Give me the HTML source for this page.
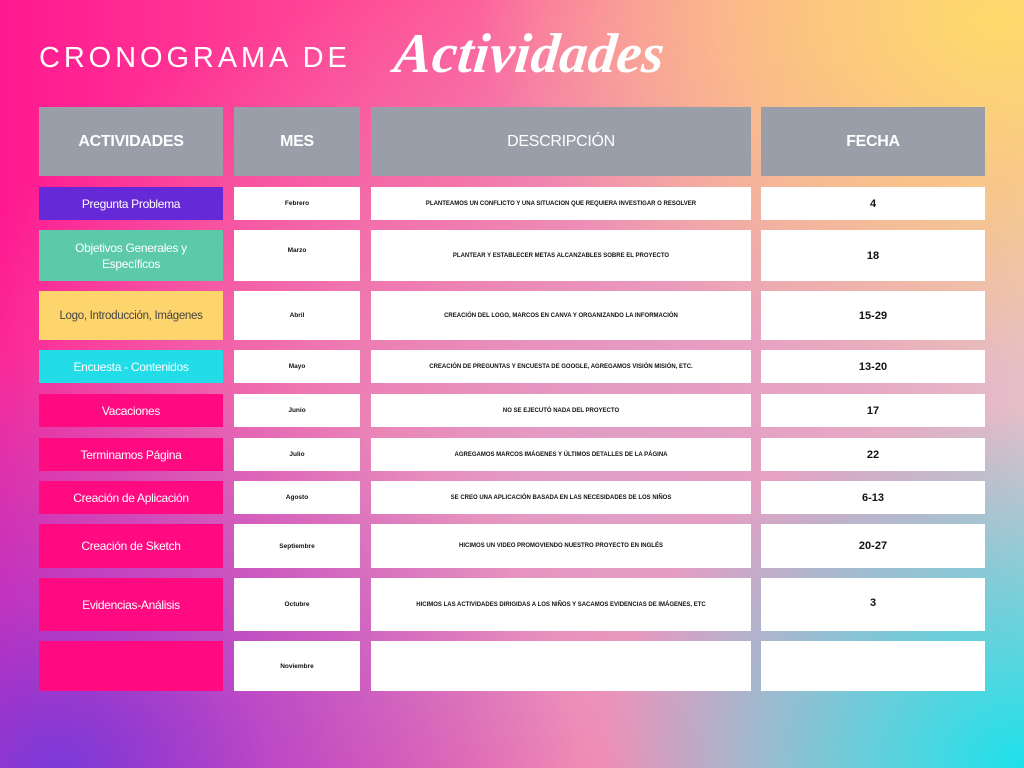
<!DOCTYPE html>
<html><head><meta charset="utf-8"><style>
*{margin:0;padding:0;box-sizing:border-box}
body{width:1024px;height:768px;overflow:hidden;position:relative;font-family:"Liberation Sans",sans-serif;
background:
radial-gradient(ellipse 420px 360px at 1024px 768px,#1ce0ea 0%,rgba(40,220,230,0.6) 45%,rgba(40,220,230,0) 100%),
radial-gradient(ellipse 520px 360px at 1000px 20px,#ffd96a 0%,rgba(255,200,110,0.7) 45%,rgba(255,180,120,0) 100%),
radial-gradient(ellipse 520px 420px at 60px 768px,#7a3ad8 0%,rgba(150,60,220,0.6) 40%,rgba(150,60,220,0) 100%),
radial-gradient(ellipse 700px 520px at 600px 480px,#e0a0c8 0%,rgba(230,150,190,0) 100%),
linear-gradient(90deg,#ff1890 0%,#ff5a98 45%,#f5a8b8 75%,#e8d0c8 100%);}
.t1{position:absolute;left:39px;top:42px;color:#fff;font-size:29px;letter-spacing:3.9px;font-weight:400}
.t2{position:absolute;left:398px;top:22px;color:#fff;font-family:"Liberation Serif",serif;font-style:italic;font-weight:bold;font-size:56px;letter-spacing:0.5px;transform-origin:left top;transform:skewX(-6deg)}
.c{position:absolute;display:flex;align-items:center;justify-content:center;text-align:center}
.h{background:#9a9ea9;color:#fff;font-size:16px;font-weight:bold;top:107px;height:69px;letter-spacing:-0.3px}
.w{background:#fff;color:#111}
.m{font-size:6.5px;font-weight:bold}
.d{font-size:6px;font-weight:bold;letter-spacing:0}
.f{font-size:11px;font-weight:bold}
.a{color:#fff;font-size:12px;line-height:16px;padding:0 8px;letter-spacing:-0.3px}
</style></head><body>
<div class="t1">CRONOGRAMA DE</div>
<div class="t2">Actividades</div>

<div class="c h" style="left:39px;width:184px">ACTIVIDADES</div>
<div class="c h" style="left:234px;width:126px">MES</div>
<div class="c h" style="left:371px;width:380px;font-weight:normal">DESCRIPCIÓN</div>
<div class="c h" style="left:761px;width:224px">FECHA</div>

<div class="c a" style="left:39px;width:184px;top:187px;height:33px;background:#6629d8">Pregunta Problema</div>
<div class="c w m" style="left:234px;width:126px;top:187px;height:33px">Febrero</div>
<div class="c w d" style="left:371px;width:380px;top:187px;height:33px">PLANTEAMOS UN CONFLICTO Y UNA SITUACION QUE REQUIERA INVESTIGAR O RESOLVER</div>
<div class="c w f" style="left:761px;width:224px;top:187px;height:33px">4</div>

<div class="c a" style="left:39px;width:184px;top:230px;height:51px;background:#5ccaa8">Objetivos Generales y Específicos</div>
<div class="c w m" style="left:234px;width:126px;top:230px;height:51px;align-items:flex-start;padding-top:17px">Marzo</div>
<div class="c w d" style="left:371px;width:380px;top:230px;height:51px">PLANTEAR Y ESTABLECER METAS ALCANZABLES SOBRE EL PROYECTO</div>
<div class="c w f" style="left:761px;width:224px;top:230px;height:51px">18</div>

<div class="c a" style="left:39px;width:184px;top:291px;height:49px;background:#fed46c;color:#444;white-space:nowrap;font-size:11.5px">Logo, Introducción, Imágenes</div>
<div class="c w m" style="left:234px;width:126px;top:291px;height:49px">Abril</div>
<div class="c w d" style="left:371px;width:380px;top:291px;height:49px">CREACIÓN DEL LOGO, MARCOS EN CANVA Y ORGANIZANDO LA INFORMACIÓN</div>
<div class="c w f" style="left:761px;width:224px;top:291px;height:49px">15-29</div>

<div class="c a" style="left:39px;width:184px;top:350px;height:33px;background:#22dde8">Encuesta - Contenidos</div>
<div class="c w m" style="left:234px;width:126px;top:350px;height:33px">Mayo</div>
<div class="c w d" style="left:371px;width:380px;top:350px;height:33px">CREACIÓN DE PREGUNTAS Y ENCUESTA DE GOOGLE, AGREGAMOS VISIÓN MISIÓN, ETC.</div>
<div class="c w f" style="left:761px;width:224px;top:350px;height:33px">13-20</div>

<div class="c a" style="left:39px;width:184px;top:394px;height:33px;background:#ff0a80">Vacaciones</div>
<div class="c w m" style="left:234px;width:126px;top:394px;height:33px">Junio</div>
<div class="c w d" style="left:371px;width:380px;top:394px;height:33px">NO SE EJECUTÓ NADA DEL PROYECTO</div>
<div class="c w f" style="left:761px;width:224px;top:394px;height:33px">17</div>

<div class="c a" style="left:39px;width:184px;top:438px;height:33px;background:#ff0a80">Terminamos Página</div>
<div class="c w m" style="left:234px;width:126px;top:438px;height:33px">Julio</div>
<div class="c w d" style="left:371px;width:380px;top:438px;height:33px">AGREGAMOS MARCOS IMÁGENES Y ÚLTIMOS DETALLES DE LA PÁGINA</div>
<div class="c w f" style="left:761px;width:224px;top:438px;height:33px">22</div>

<div class="c a" style="left:39px;width:184px;top:481px;height:33px;background:#ff0a80">Creación de Aplicación</div>
<div class="c w m" style="left:234px;width:126px;top:481px;height:33px">Agosto</div>
<div class="c w d" style="left:371px;width:380px;top:481px;height:33px">SE CREO UNA APLICACIÓN BASADA EN LAS NECESIDADES DE LOS NIÑOS</div>
<div class="c w f" style="left:761px;width:224px;top:481px;height:33px">6-13</div>

<div class="c a" style="left:39px;width:184px;top:524px;height:44px;background:#ff0a80">Creación de Sketch</div>
<div class="c w m" style="left:234px;width:126px;top:524px;height:44px">Septiembre</div>
<div class="c w d" style="left:371px;width:380px;top:524px;height:44px">HICIMOS UN VIDEO PROMOVIENDO NUESTRO PROYECTO EN INGLÉS</div>
<div class="c w f" style="left:761px;width:224px;top:524px;height:44px">20-27</div>

<div class="c a" style="left:39px;width:184px;top:578px;height:53px;background:#ff0a80">Evidencias-Análisis</div>
<div class="c w m" style="left:234px;width:126px;top:578px;height:53px">Octubre</div>
<div class="c w d" style="left:371px;width:380px;top:578px;height:53px">HICIMOS LAS ACTIVIDADES DIRIGIDAS A LOS NIÑOS Y SACAMOS EVIDENCIAS DE IMÁGENES, ETC</div>
<div class="c w f" style="left:761px;width:224px;top:578px;height:53px;align-items:flex-start;padding-top:19px">3</div>

<div class="c a" style="left:39px;width:184px;top:641px;height:50px;background:#ff0a80"></div>
<div class="c w m" style="left:234px;width:126px;top:641px;height:50px">Noviembre</div>
<div class="c w d" style="left:371px;width:380px;top:641px;height:50px"></div>
<div class="c w f" style="left:761px;width:224px;top:641px;height:50px"></div>
</body></html>
